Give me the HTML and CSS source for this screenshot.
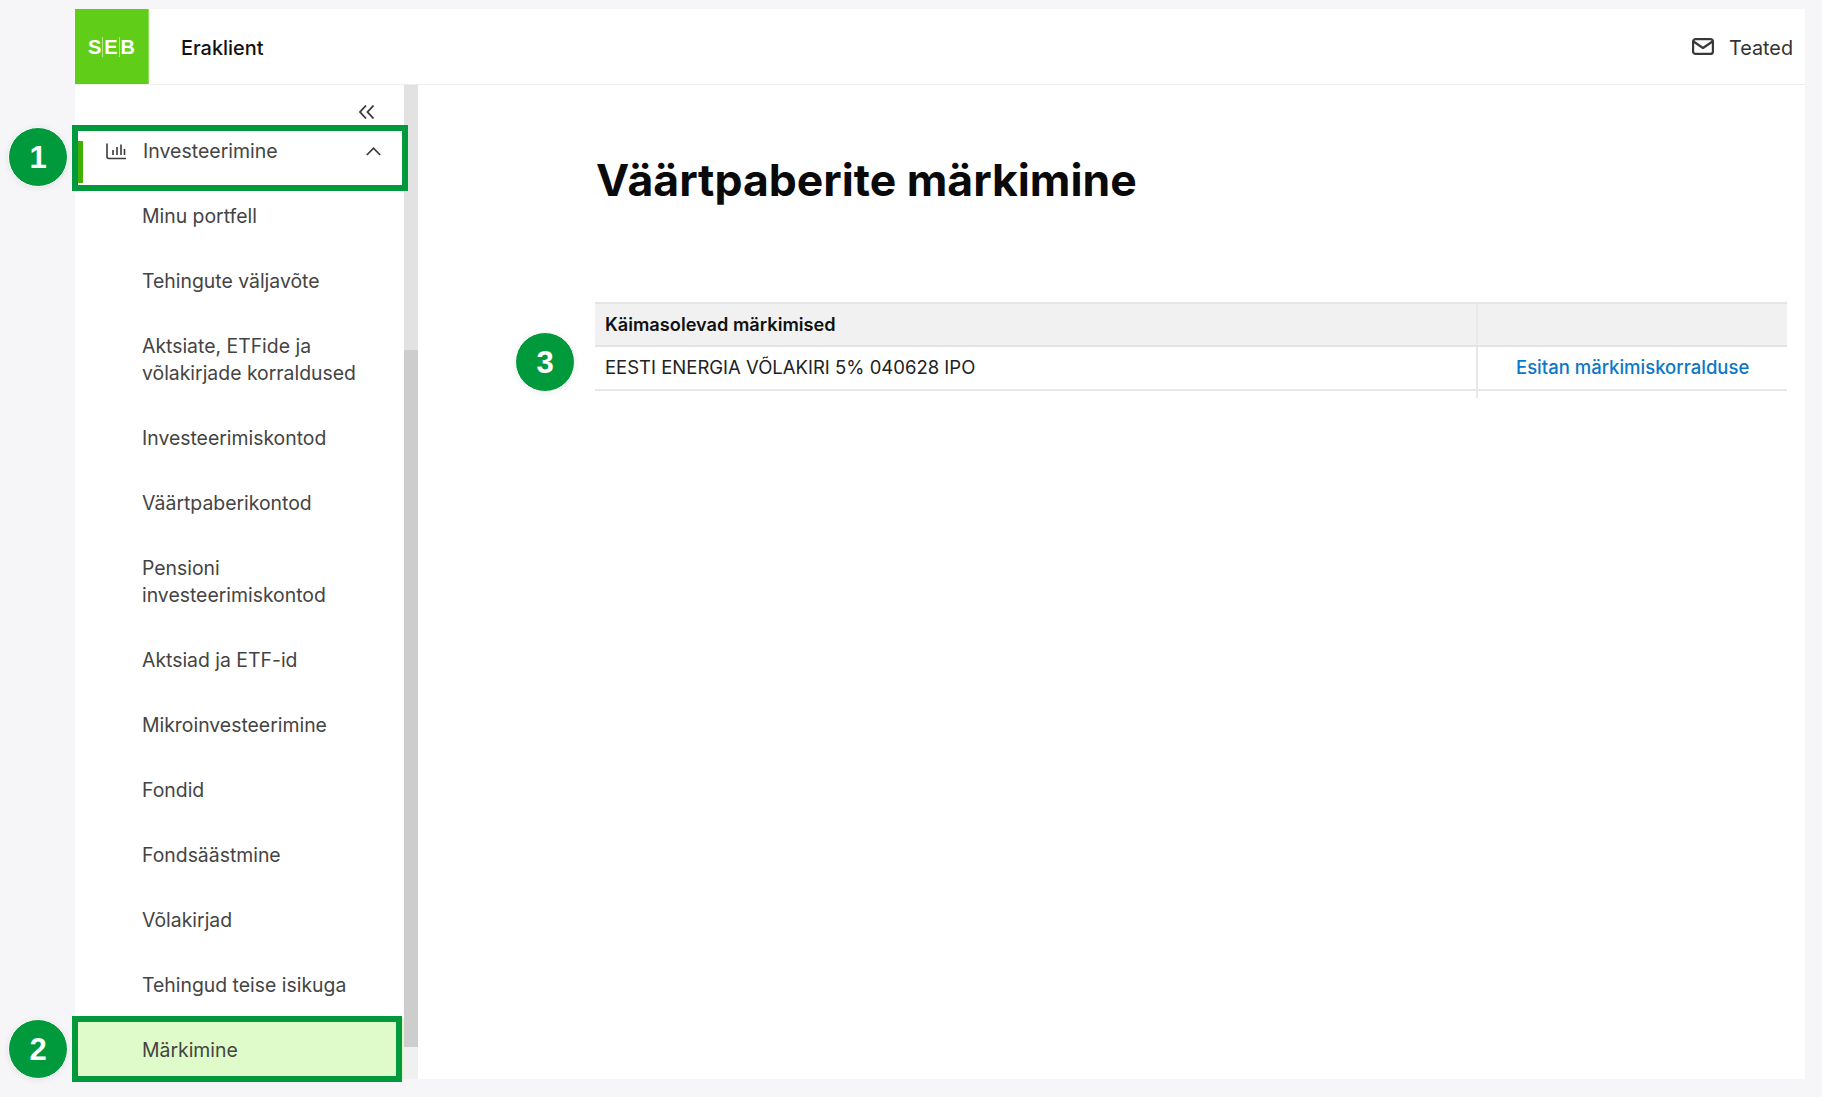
FILE: index.html
```html
<!DOCTYPE html>
<html lang="et">
<head>
<meta charset="utf-8">
<title>Väärtpaberite märkimine</title>
<link rel="stylesheet" href="styles.css">
</head>
<body>
<div class="app">
  <header class="topbar">
    <div class="logo"><span class="logo-l">S</span><span class="logo-l logo-sep">E</span><span class="logo-l logo-sep">B</span></div>
    <div class="brand">Eraklient</div>
    <div class="notices">
      <svg class="mail" width="22" height="17" viewBox="0 0 22 17" fill="none" stroke="#383838" stroke-width="2.200" stroke-linejoin="round" stroke-linecap="round"><rect x="1.100" y="1.100" width="19.800" height="14.800" rx="2.500"/><path d="M1.500 3.500 11 10 20.500 3.500"/></svg>
      <span>Teated</span>
    </div>
  </header>
  <div class="body">
    <aside class="sidebar">
      <nav class="nav">
        <div class="collapse">
          <svg width="15" height="14" viewBox="0 0 15 14" fill="none" stroke="#333" stroke-width="1.700"><path d="M7 .5 1 7l6 6.500M14.500 .5 8.500 7l6 6.500"/></svg>
        </div>
        <div class="nav-head">
          <span class="accent"></span>
          <svg class="chart" width="20" height="17" viewBox="0 0 20 17" fill="none" stroke="#3a3a3a" stroke-width="1.600"><path d="M1 .5v13q0 2 2 2h17"/><path d="M7 7v5M11 4v8M15 1.500V12M18.500 6v6"/></svg>
          <span class="nav-head-text">Investeerimine</span>
          <svg class="chev" width="15" height="9" viewBox="0 0 15 9" fill="none" stroke="#3a3a3a" stroke-width="1.700"><path d="M.8 8 7.500 1.200 14.200 8"/></svg>
        </div>
        <a class="item">Minu portfell</a>
        <a class="item">Tehingute väljavõte</a>
        <a class="item">Aktsiate, ETFide ja<br>võlakirjade korraldused</a>
        <a class="item">Investeerimiskontod</a>
        <a class="item">Väärtpaberikontod</a>
        <a class="item">Pensioni<br>investeerimiskontod</a>
        <a class="item">Aktsiad ja ETF-id</a>
        <a class="item">Mikroinvesteerimine</a>
        <a class="item">Fondid</a>
        <a class="item">Fondsäästmine</a>
        <a class="item">Võlakirjad</a>
        <a class="item">Tehingud teise isikuga</a>
        <a class="item item-active">Märkimine</a>
      </nav>
      <div class="scrollbar"><div class="scroll-thumb"></div></div>
    </aside>
    <main class="content">
      <h1 class="title">Väärtpaberite märkimine</h1>
      <table class="grid">
        <thead>
          <tr><th class="c1">Käimasolevad märkimised</th><th class="c2"></th></tr>
        </thead>
        <tbody>
          <tr><td class="c1">EESTI ENERGIA VÕLAKIRI 5% 040628 IPO</td><td class="c2"><a class="link">Esitan märkimiskorralduse</a></td></tr>
        </tbody>
      </table>
      <div class="col-tail"></div>
    </main>
  </div>
</div>
<div class="mark mark-1"></div>
<div class="mark mark-2"></div>
<div class="badge badge-1">1</div>
<div class="badge badge-2">2</div>
<div class="badge badge-3">3</div>
</body>
</html>
```
FILE: styles.css
```css
* { box-sizing: border-box; }
html, body { margin: 0; height: 100%; }
body {
  position: relative;
  width: 1822px;
  height: 1097px;
  overflow: hidden;
  background: #f6f6f9;
  font-family: Inter, "Liberation Sans", sans-serif;
  color: #333;
  padding: 9px 17px 18px 75px;
}
.app { height: 1070px; background: #fff; display: flex; flex-direction: column; }
.topbar {
  height: 76px;
  flex: none;
  display: flex;
  align-items: center;
  border-bottom: 1px solid #eee;
  padding-right: 12px;
}
.logo {
  width: 74px;
  height: 75px;
  background: #60cd18;
  border-right: 1px solid #8ade55;
  color: #fff;
  font: bold 20px "Liberation Sans", sans-serif;
  display: flex;
  align-items: center;
  justify-content: center;
  padding-top: 1px;
}
.logo-l { padding: 0 1px; line-height: 20px; }
.logo-sep { border-left: 1px solid #b5e892; }
.brand { margin-left: 32px; font-size: 19.900px; font-weight: 500; color: #111; padding-top: 2px; }
.notices { margin-left: auto; display: flex; align-items: center; gap: 15px; font-size: 19.800px; color: #333; padding-top: 2px; }
.mail { display: block; margin-top: -2px; }
.body { flex: 1; min-height: 0; display: flex; }
.sidebar { width: 343px; flex: none; display: flex; }
.nav { width: 329px; flex: none; display: flex; flex-direction: column; overflow: hidden; }
.collapse { height: 40px; flex: none; display: flex; justify-content: flex-end; align-items: flex-end; padding-right: 30px; padding-bottom: 6px; }
.nav-head {
  height: 59px;
  flex: none;
  display: flex;
  align-items: flex-start;
  padding-top: 13px;
  padding-left: 31px;
  position: relative;
  font-size: 19.500px;
  color: #444;
}
.accent { position: absolute; left: 3px; top: 16px; width: 5px; height: 42px; background: #41b000; }
.chart { margin-top: 5px; flex: none; }
.nav-head-text { margin-left: 17px; line-height: 27px; }
.chev { position: absolute; left: 291px; top: 22px; }
.item {
  display: block;
  flex: none;
  padding: 19px 0 19px 67px;
  font-size: 19.400px;
  line-height: 27px;
  color: #444;
}
.item-active { background: #dffbca; }
.scrollbar { width: 14px; background: #f0f0f0; flex: none; }
.scroll-thumb { height: 962px; background: linear-gradient(#e2e2e2 0, #e2e2e2 265px, #cdcdcd 265px); }
.content { flex: 1; min-width: 0; padding: 0 18px 0 177px; position: relative; }
.title { margin: 67px 0 0 1px; font-size: 44.500px; line-height: 56px; font-weight: 700; color: #0a0a0a; }
.grid { width: 100%; margin-top: 94px; border-collapse: collapse; table-layout: fixed; font-size: 18.500px; }
.grid th { height: 43px; background: #f1f1f1; border-top: 2px solid #e4e4e4; border-bottom: 2px solid #e4e4e4; text-align: left; font-weight: 600; font-size: 18.200px; color: #111; padding: 0 10px 1px; }
.grid td { height: 44px; border-bottom: 2px solid #e8e8e8; padding: 0 10px 2px; color: #222; }
.grid .c1 { width: 882px; }
.grid .c2 { border-left: 2px solid #e8e8e8; padding-left: 38px; }
.link { color: #0a78c8; font-weight: 500; white-space: nowrap; }
.col-tail { position: absolute; left: 1058px; top: 304px; width: 2px; height: 9px; background: #e8e8e8; }
.mark { position: absolute; border: 6px solid #009a3d; }
.mark-1 { left: 72px; top: 125px; width: 336px; height: 66px; }
.mark-2 { left: 72px; top: 1016px; width: 330px; height: 66px; }
.badge {
  position: absolute;
  width: 60px;
  height: 60px;
  border-radius: 50%;
  background: #009a3d;
  border: 1px solid #fff;
  color: #fff;
  font: bold 31px/59px "Liberation Sans", sans-serif;
  text-align: center;
  box-shadow: 0 1px 6px rgba(0,0,0,.08);
}
.badge-1 { left: 8px; top: 127px; }
.badge-2 { left: 8px; top: 1019px; }
.badge-3 { left: 515px; top: 332px; }
```
